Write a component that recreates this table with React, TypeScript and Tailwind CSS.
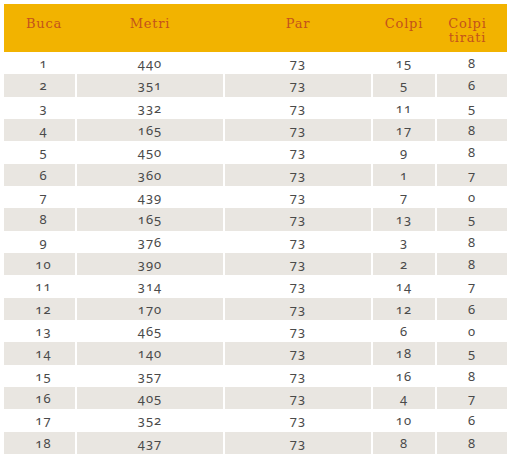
const rows: [number, number, number, number, number][] = [
  [1, 440, 73, 15, 8],
  [2, 351, 73, 5, 6],
  [3, 332, 73, 11, 5],
  [4, 165, 73, 17, 8],
  [5, 450, 73, 9, 8],
  [6, 360, 73, 1, 7],
  [7, 439, 73, 7, 0],
  [8, 165, 73, 13, 5],
  [9, 376, 73, 3, 8],
  [10, 390, 73, 2, 8],
  [11, 314, 73, 14, 7],
  [12, 170, 73, 12, 6],
  [13, 465, 73, 6, 0],
  [14, 140, 73, 18, 5],
  [15, 357, 73, 16, 8],
  [16, 405, 73, 4, 7],
  [17, 352, 73, 10, 6],
  [18, 437, 73, 8, 8],
];

export default function App() {
  return (
    <div className="w-[510px] h-[461px] bg-white pt-[4px] pl-[4px]">
      <table className="table-fixed border-collapse w-[503px]">
        <colgroup>
          <col className="w-[72px]" />
          <col className="w-[148px]" />
          <col className="w-[148px]" />
          <col className="w-[64px]" />
          <col className="w-[71px]" />
        </colgroup>
        <thead>
          <tr className="h-[48px] bg-[#f2b300] text-[#c4521c] text-[13px] leading-[14px] tracking-[0.06em] font-['DejaVu_Serif',serif]">
            <th className="align-top pt-[13px] pl-[8px] font-normal">Buca</th>
            <th className="align-top pt-[13px] font-normal">Metri</th>
            <th className="align-top pt-[13px] font-normal">Par</th>
            <th className="align-top pt-[13px] font-normal">Colpi</th>
            <th className="align-top pt-[13px] pr-[8px] font-normal">Colpi tirati</th>
          </tr>
        </thead>
        <tbody className="text-[#4a4a4a] text-[13px] tracking-[0.08em] font-['Noto_Sans',sans-serif] oldstyle-nums">
          {rows.map((r, i) => (
            <tr key={i} className={`h-[22.33px] ${i % 2 === 1 ? "bg-[#e9e6e1]" : "bg-white"}`}>
              {r.map((v, j) => (
                <td
                  key={j}
                  className={`p-0 text-center leading-[22px] ${j === 0 ? "pl-[8px]" : "border-l-2 border-white"}`}
                >
                  {v}
                </td>
              ))}
            </tr>
          ))}
        </tbody>
      </table>
    </div>
  );
}
